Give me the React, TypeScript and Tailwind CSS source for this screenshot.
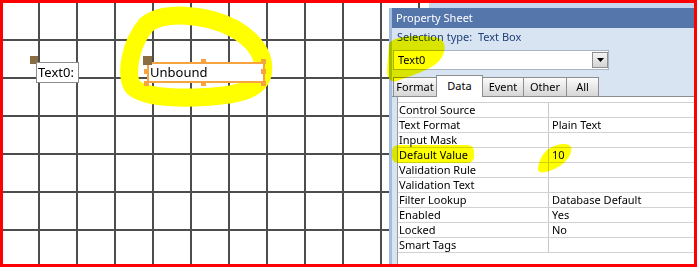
const rows: [string, string][] = [
  ["Control Source", ""],
  ["Text Format", "Plain Text"],
  ["Input Mask", ""],
  ["Default Value", "10"],
  ["Validation Rule", ""],
  ["Validation Text", ""],
  ["Filter Lookup", "Database Default"],
  ["Enabled", "Yes"],
  ["Locked", "No"],
  ["Smart Tags", ""],
];

function Tab({ label, w, first }: { label: string; w: string; first?: boolean }) {
  return (
    <div
      className={`${w} ${first ? "" : "-ml-px"} h-[19px] border border-b-0 border-[#8e8e8e] bg-linear-to-b from-[#fbfbfb] to-[#d6d6d6] text-center text-[11px] leading-[18px] text-black`}
    >
      {label}
    </div>
  );
}

function Handle({ className }: { className: string }) {
  return <div className={`absolute w-[5px] h-[5px] bg-[#f6a340] ${className}`} />;
}

export default function App() {
  return (
    <div className="relative w-[697px] h-[267px] bg-[#f00] p-[3px] overflow-hidden font-['Noto_Sans',sans-serif]">
      <div className="flex w-full h-full bg-white bg-[linear-gradient(to_right,#4d4d4d_2px,transparent_2px),linear-gradient(to_bottom,#4d4d4d_2px,transparent_2px)] bg-size-[38px_38px] bg-position-[35px_36px]">
        {/* design canvas */}
        <div className="relative w-[386px] h-full shrink-0">
          <svg className="absolute inset-0" width="386" height="261" viewBox="3 3 386 261">
            <path
              d="M 146 25 C 163 11, 205 13, 235 29 C 255 41, 265 56, 263 72 C 261 88, 243 95, 205 97 C 170 99, 142 96, 133 87 C 125 75, 130 44, 146 25 Z"
              fill="none"
              stroke="#ffff00"
              strokeWidth="18"
              strokeLinejoin="round"
            />
          </svg>

          {/* label control */}
          <div className="absolute left-[27px] top-[53px] w-[8px] h-[8px] bg-[#8b6d43]" />
          <div className="absolute left-[33px] top-[59px] w-[43px] h-[21px] border border-[#8c8c8c] bg-white pl-[1px] text-[13px] leading-[19px] text-black">
            Text0:
          </div>

          {/* text box control */}
          <div className="absolute left-[144px] top-[59px] w-[118px] h-[21px] border-2 border-[#f6a340] bg-white pl-[1px] text-[13px] leading-[17px] text-black">
            Unbound
          </div>
          <div className="absolute left-[140px] top-[53px] w-[9px] h-[9px] bg-[#8b6d43]" />
          <Handle className="left-[141px] top-[66px]" />
          <Handle className="left-[141px] top-[78px]" />
          <Handle className="left-[198px] top-[56px]" />
          <Handle className="left-[198px] top-[78px]" />
          <Handle className="left-[258px] top-[56px]" />
          <Handle className="left-[258px] top-[66px]" />
          <Handle className="left-[258px] top-[78px]" />
        </div>

        {/* property sheet pane */}
        <div className="flex flex-col w-[305px] h-full shrink-0">
          <div className="flex h-[5px] shrink-0">
            <div className="w-[40px]" />
            <div className="flex-1 bg-[#c7d7ed]" />
          </div>
          <div className="flex flex-col flex-1 border-l-[3px] border-[#a4bce0] bg-[#d9e4f2]">
            <div className="h-[20px] bg-[#5576ab] pl-[4px] text-[11px] leading-[20px] text-white">
              Property Sheet
            </div>
            <div className="h-[18px] pl-[5px] text-[11px] leading-[18px] text-[#21417a] whitespace-pre">
              {"Selection type:  Text Box"}
            </div>
            <div className="mt-[4px] ml-[1px] w-[216px] h-[20px] flex items-center justify-between border border-[#a9b3c3] bg-white">
              <span className="pl-[4px] text-[11px] leading-[18px] text-black">Text0</span>
              <div className="w-[16px] h-[16px] flex items-center justify-center border border-[#8f8f8f] bg-linear-to-b from-[#f4f4f4] to-[#d4d4d4]">
                <svg width="7" height="4" viewBox="0 0 7 4">
                  <polygon points="0,0 7,0 3.5,4" fill="#000" />
                </svg>
              </div>
            </div>
            <div className="mt-[5px] h-[22px] flex items-end pl-[1px] border-b border-[#8c8c8c]">
              <Tab label="Format" w="w-[44px]" first />
              <div className="-ml-px w-[47px] h-[22px] -mb-px relative z-10 border border-b-0 border-[#8e8e8e] bg-white text-center text-[11px] leading-[20px] text-black">
                Data
              </div>
              <Tab label="Event" w="w-[42px]" />
              <Tab label="Other" w="w-[44px]" />
              <Tab label="All" w="w-[33px]" />
            </div>
            <div className="flex-1 ml-[5px] bg-white border-l border-[#9c9c9c] pt-[5px]">
              <div className="border-t border-[#cfcfcf]">
                {rows.map(([k, v]) => (
                  <div key={k} className="flex h-[15px] border-b border-[#d2d2d2] text-[11px] leading-[14px] text-black">
                    <div className="w-[151px] shrink-0 border-r border-[#c8c8c8] pl-[1px]">{k}</div>
                    <div className="flex-1 pl-[3px]">{v}</div>
                  </div>
                ))}
              </div>
            </div>
          </div>
        </div>
      </div>

      {/* highlighter annotations */}
      <svg className="absolute inset-0 pointer-events-none mix-blend-multiply" width="697" height="267" viewBox="0 0 697 267">
        <g fill="#ffff00">
          <path d="M 389 44 C 392 36, 420 34, 438 38 C 447 41, 446 52, 440 60 C 432 70, 410 76, 397 81 C 390 83, 387 78, 387 70 Z" />
          <rect x="443" y="80" width="33" height="15" rx="3" />
          <rect x="392" y="145" width="82" height="18" rx="6" />
          <path d="M 550 148 C 558 144, 568 142, 571 147 C 573 155, 565 165, 552 170 C 545 173, 537 174, 538 168 C 539 160, 543 152, 550 148 Z" />
        </g>
      </svg>
    </div>
  );
}
